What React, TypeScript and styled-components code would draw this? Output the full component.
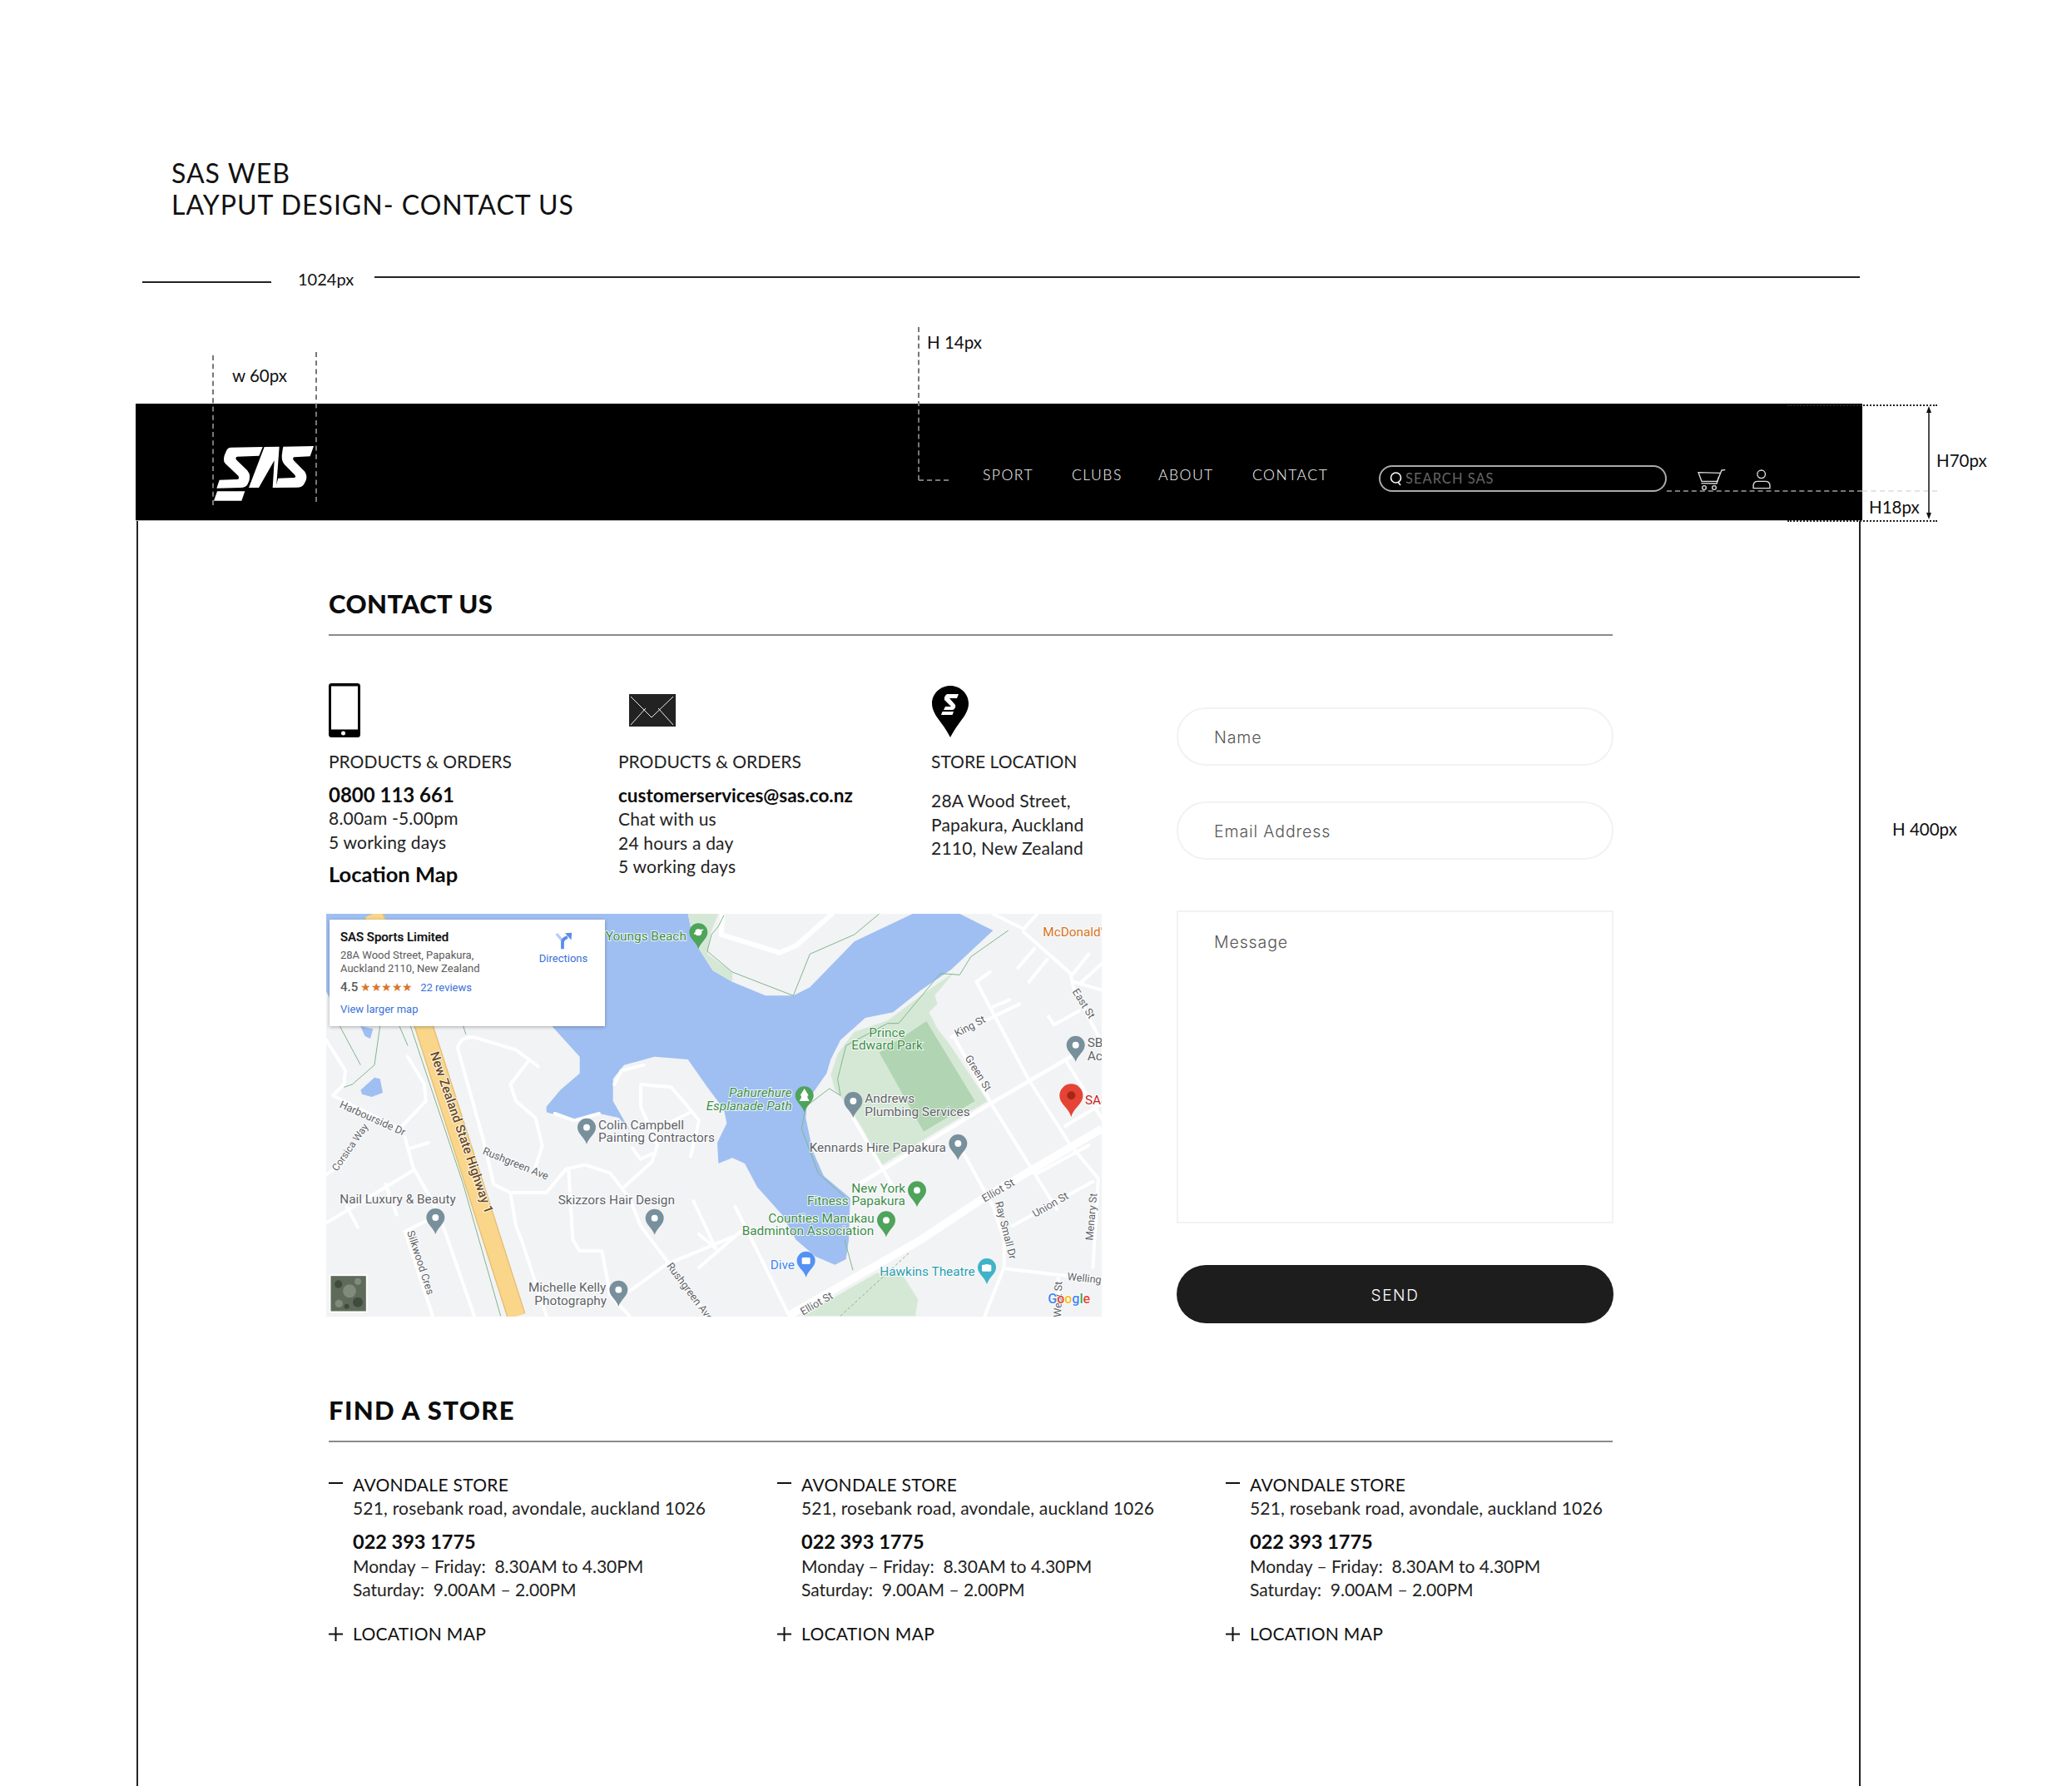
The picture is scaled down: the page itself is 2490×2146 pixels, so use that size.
import React from "react";
import styled, { createGlobalStyle } from "styled-components";

const Global = createGlobalStyle`
  html, body { margin: 0; padding: 0; background: #fff; }
  * { box-sizing: border-box; }
`;

const FONT = `"Lato", "Open Sans", "Liberation Sans", sans-serif`;
const FORM_FONT = `"Inter", "Open Sans", "Liberation Sans", sans-serif`;

const Root = styled.div`
  position: relative;
  width: 2490px;
  height: 2146px;
  overflow: hidden;
  background: #fff;
  color: #111;
  font-family: ${FONT};
  display: flex;
  flex-direction: column;
`;
const TitleBlock = styled.h1`
  margin: 0;
  padding: 189px 0 0 206px;
  font-size: 32px;
  line-height: 38px;
  font-weight: 400;
  letter-spacing: 1px;
  color: #111;
`;
const RulerRow = styled.div`
  margin-top: 55px;
  height: 30px;
  padding-left: 171px;
  display: flex;
  align-items: flex-start;
  flex: none;
`;
const RulerLine = styled.div<{ $w: number; $top: number }>`
  width: ${(p) => p.$w}px;
  height: 2px;
  margin-top: ${(p) => p.$top}px;
  background: #222;
  flex: none;
`;
const RulerLabel = styled.div`
  width: 124px;
  padding-left: 32px;
  font-size: 20px;
  line-height: 30px;
  flex: none;
`;
const Header = styled.header`
  margin: 135px 0 0 163px;
  width: 2075px;
  height: 141px;
  flex: none;
  background: #000;
  border-bottom: 1px solid #bbb;
  display: flex;
  align-items: flex-start;
  padding: 74px 0 0 94px;
`;
const LogoWrap = styled.div`
  width: 120px;
  height: 66px;
  margin-top: -23px;
  flex: none;
  svg { display: block; }
`;
const Nav = styled.nav`
  margin-left: 804px;
  width: 478px;
  padding-top: 2px;
  flex: none;
  display: grid;
  grid-template-columns: 107px 104px 113px 1fr;
`;
const NavItem = styled.a`
  color: #fff;
  font-size: 17.5px;
  line-height: 20px;
  font-weight: 300;
  letter-spacing: 1.5px;
`;
const Search = styled.div`
  width: 346px;
  height: 32px;
  margin-left: -2px;
  flex: none;
  border: 2px solid #aaa;
  border-radius: 16px;
  display: flex;
  align-items: center;
  padding-left: 11px;
  gap: 3px;
  color: #666;
  font-size: 16.5px;
  letter-spacing: 1px;
  svg { flex: none; }
`;
const IconButton = styled.div<{ $ml: number; $mt: number }>`
  margin-left: ${(p) => p.$ml}px;
  margin-top: ${(p) => p.$mt}px;
  flex: none;
  line-height: 0;
`;
const PageFrame = styled.main`
  margin-left: 164px;
  width: 2072px;
  flex: 1;
  border-left: 2px solid #222;
  border-right: 2px solid #222;
  padding: 81px 0 0 229px;
`;
const Content = styled.div`
  width: 1543px;
`;
const SectionTitle = styled.h2<{ $ls: number }>`
  margin: 0;
  font-size: 31px;
  line-height: 36px;
  font-weight: 900;
  letter-spacing: ${(p) => p.$ls}px;
  padding-bottom: 19px;
  border-bottom: 2px solid #8a8a8a;
  color: #0c0c0c;
`;
const ContactBody = styled.div`
  display: grid;
  grid-template-columns: 1019px 525px;
`;
const LeftCol = styled.div`
  padding-top: 57px;
`;
const InfoGrid = styled.div`
  display: grid;
  grid-template-columns: 348px 376px 1fr;
  height: 246px;
`;
const InfoCol = styled.div``;
const IconSlot = styled.div`
  height: 65px;
  display: flex;
  align-items: center;
  svg { display: block; }
`;
const EnvelopeSlot = styled(IconSlot)`
  padding-left: 13px;
`;
const PinSlot = styled(IconSlot)`
  padding-top: 4px;
`;
const InfoLabel = styled.div`
  margin-top: 14px;
  font-size: 21px;
  line-height: 29px;
  color: #222;
`;
const InfoStrong = styled.div<{ $mt: number; $size: number }>`
  margin-top: ${(p) => p.$mt}px;
  font-size: ${(p) => p.$size}px;
  line-height: 29px;
  font-weight: 700;
  color: #0c0c0c;
`;
const InfoLine = styled.div`
  font-size: 21px;
  line-height: 28.6px;
  letter-spacing: 0.2px;
  color: #222;
`;
const InfoLines = styled.div<{ $mt: number }>`
  margin-top: ${(p) => p.$mt}px;
`;
const MapCanvas = styled.div`
  position: relative;
  margin: 31px 0 0 -3px;
  width: 932px;
  height: 484px;
  overflow: hidden;
  background: #f2f3f5;
  svg { display: block; }
`;
const MapText = styled.text<{ $c: string; $i?: boolean; $w?: number; $s?: number }>`
  font-family: "Roboto", "Liberation Sans", sans-serif;
  font-size: ${(p) => p.$s ?? 46}px;
  font-style: ${(p) => (p.$i ? "italic" : "normal")};
  font-weight: ${(p) => p.$w ?? 400};
  fill: ${(p) => p.$c};
  paint-order: stroke;
  stroke: rgba(255, 255, 255, 0.85);
  stroke-width: 6px;
`;
const InfoCard = styled.div`
  position: absolute;
  left: 4px;
  top: 7px;
  width: 331px;
  height: 128px;
  background: #fff;
  box-shadow: 0 1px 4px rgba(0, 0, 0, 0.3);
  padding: 12px 0 0 13px;
  font-family: "Roboto", "Liberation Sans", sans-serif;
  display: flex;
`;
const CardMain = styled.div`
  width: 239px;
  flex: none;
`;
const CardTitle = styled.div`
  font-size: 15px;
  line-height: 18px;
  font-weight: 500;
  color: #111;
  -webkit-text-stroke: 0.2px #111;
`;
const CardAddress = styled.div`
  margin-top: 5px;
  font-size: 13px;
  line-height: 15.5px;
  color: #5b5b5b;
`;
const CardRating = styled.div`
  margin-top: 4px;
  height: 22px;
  display: flex;
  align-items: center;
  font-size: 15px;
  font-weight: 500;
  color: #5b5b5b;
`;
const Stars = styled.span`
  margin-left: 3px;
  width: 60px;
  font-size: 14px;
  letter-spacing: -0.5px;
  color: #d9762a;
`;
const CardLink = styled.a`
  color: #3a71d8;
  font-size: 13px;
  font-weight: 400;
`;
const ReviewLink = styled(CardLink)`
  margin-left: 12px;
`;
const LargerLink = styled(CardLink)`
  display: block;
  margin-top: 8px;
  line-height: 16px;
`;
const Directions = styled.div`
  width: 62px;
  margin-left: -2px;
  display: flex;
  flex-direction: column;
  align-items: center;
  color: #3a71d8;
  font-size: 13px;
  line-height: 16px;
  svg { margin: 3px 0 3px; }
`;
const Form = styled.form`
  padding-top: 86px;
  display: flex;
  flex-direction: column;
`;
const Field = styled.div<{ $mt: number }>`
  margin-top: ${(p) => p.$mt}px;
  height: 70px;
  border: 2px solid #f2f2f2;
  border-radius: 35px;
  padding: 2px 0 0 43px;
  display: flex;
  align-items: center;
  font-family: ${FORM_FONT};
  font-size: 19.5px;
  font-weight: 300;
  letter-spacing: 0.9px;
  color: #555;
`;
const MessageBox = styled.div`
  margin-top: 61px;
  height: 376px;
  border: 2px solid #f2f2f2;
  padding: 22px 0 0 43px;
  font-family: ${FORM_FONT};
  font-size: 19.5px;
  line-height: 28px;
  font-weight: 300;
  letter-spacing: 0.9px;
  color: #555;
`;
const SendButton = styled.button`
  margin-top: 50px;
  height: 70px;
  border: 0;
  border-radius: 35px;
  background: #1d1d1d;
  color: #fff;
  padding: 3px 0 0;
  font-family: ${FORM_FONT};
  font-size: 19px;
  font-weight: 300;
  letter-spacing: 1.6px;
`;
const FindTitle = styled(SectionTitle)`
  margin-top: 86px;
`;
const StoreGrid = styled.div`
  display: grid;
  grid-template-columns: repeat(3, 539px);
  padding-top: 37px;
`;
const Store = styled.div`
  display: grid;
  grid-template-columns: 29px 1fr;
`;
const StoreMark = styled.div`
  padding-top: 9px;
  line-height: 0;
`;
const PlusMark = styled.div`
  line-height: 0;
  padding-top: 6px;
`;
const StoreBody = styled.div``;
const StoreTitle = styled.div`
  font-size: 21px;
  line-height: 28px;
  color: #111;
  letter-spacing: 0.3px;
`;
const StoreText = styled.div`
  font-size: 21px;
  line-height: 28.5px;
  color: #222;
`;
const StoreAddress = styled(StoreText)`
  letter-spacing: 0.19px;
`;
const StorePhone = styled.div`
  margin-top: 11px;
  font-size: 23.5px;
  line-height: 29px;
  font-weight: 700;
  color: #0c0c0c;
  margin-bottom: 1px;
`;
const LocationRow = styled.div`
  grid-column: 1 / 3;
  display: grid;
  grid-template-columns: 29px 1fr;
  margin-top: 24px;
`;
const LocationText = styled(StoreTitle)``;

/* design annotations laid over the canvas */
const DimLabel = styled.div<{ $x: number; $y: number }>`
  position: absolute;
  left: ${(p) => p.$x}px;
  top: ${(p) => p.$y}px;
  font-size: 20.5px;
  line-height: 24px;
  color: #111;
`;
const VDash = styled.div<{ $x: number; $y: number; $h: number }>`
  position: absolute;
  left: ${(p) => p.$x}px;
  top: ${(p) => p.$y}px;
  height: ${(p) => p.$h}px;
  border-left: 2px dashed #777;
`;
const HDash = styled.div<{ $x: number; $y: number; $w: number; $c: string; $style?: string }>`
  position: absolute;
  left: ${(p) => p.$x}px;
  top: ${(p) => p.$y}px;
  width: ${(p) => p.$w}px;
  border-top: 2px ${(p) => p.$style ?? "dashed"} ${(p) => p.$c};
`;
const ArrowSvg = styled.svg`
  position: absolute;
  left: 2310px;
  top: 486px;
`;

const Logo = () => (
  <svg width="120" height="66" viewBox="50 108 360 198">
    <g fill="#fff">
      <path d="M112 113 L226 111 L213 143 L134 146 Q125 150 132 158 L170 195 Q188 215 172 245 Q165 258 145 258 L60 260 L70 230 L132 228 Q145 228 138 215 L92 172 Q78 158 95 125 Q100 113 112 113 Z" />
      <path d="M62 271 L162 271 L150 305 L50 305 Z" />
      <path d="M232 111 L286 110 L275 258 L262 258 L268 160 L212 258 L176 258 Z" />
      <path d="M300 110 L410 108 L397 145 L340 148 Q332 150 338 160 L378 200 Q392 222 375 245 Q368 257 350 257 L272 258 L282 224 L338 222 Q348 222 342 212 L305 175 Q292 160 296 135 Q298 118 300 110 Z" />
    </g>
  </svg>
);

const SearchIcon = () => (
  <svg width="16" height="18" viewBox="0 0 16 18" fill="none" stroke="#fff" strokeWidth="1.6">
    <circle cx="7.5" cy="8" r="6" />
    <path d="M10 13 L13 17" />
  </svg>
);

const CartIcon = () => (
  <svg width="34" height="26" viewBox="65 42 102 78" fill="none" stroke="#ddd" strokeWidth="4">
    <path d="M165 44 L152 45 L148 55 L68 53 L80 85 L136 85 L148 55" />
    <path d="M142 68 L134 93 L78 92" />
    <circle cx="89" cy="108" r="7" />
    <circle cx="125" cy="108" r="7" />
  </svg>
);

const PersonIcon = () => (
  <svg width="22" height="24" viewBox="257 40 64 70" fill="none" stroke="#ddd" strokeWidth="4">
    <circle cx="288" cy="57" r="14" />
    <path d="M260 106 L260 95 Q262 82 275 82 L302 82 Q317 82 318 95 L318 106 Z" />
  </svg>
);

const PhoneIcon = () => (
  <svg width="38" height="65" viewBox="0 0 38 65">
    <rect width="38" height="65" rx="3.5" fill="#000" />
    <rect x="3" y="3.5" width="32" height="52" fill="#fff" />
    <circle cx="17.5" cy="60" r="2.5" fill="#fff" />
  </svg>
);

const EnvelopeIcon = () => (
  <svg width="56" height="39" viewBox="0 0 56 39">
    <rect width="56" height="39" fill="#222" />
    <path d="M2 3 L27 28 L53 3 M2 37 L20 17 M53 37 L35 17" stroke="#eee" strokeWidth="1" fill="none" />
  </svg>
);

const StorePinIcon = () => (
  <svg width="46" height="65" viewBox="0 0 46 65">
    <path d="M23 1 C10.8 1 1 10.6 1 22.5 C1 32 8 40 13 47 C17 52.5 20.5 58 23 63 C25.5 58 29 52.5 33 47 C38 40 45 32 45 22.5 C45 10.6 35.2 1 23 1 Z" fill="#000" />
    <path d="M19 11 L33 11 L31 16 L22 16 L29 24 Q30 28 26 30 L15 30 L17 26 L24 26 L16 18 Q15 14 19 11 Z" fill="#fff" />
    <path d="M13.5 32 L27 32 L25.5 36 L12 36 Z" fill="#fff" />
  </svg>
);

const MinusIcon = () => (
  <svg width="17" height="4" viewBox="0 0 17 4"><rect width="17" height="2" fill="#111" /></svg>
);
const PlusIcon = () => (
  <svg width="17" height="17" viewBox="0 0 17 17"><path d="M0 8.5 H17 M8.5 0 V17" stroke="#111" strokeWidth="2" /></svg>
);

const Pin = ({ x, y, c, r = 33 }: { x: number; y: number; c: string; r?: number }) => (
  <g>
    <path
      d={`M${x - r} ${y} a${r} ${r} 0 0 1 ${2 * r} 0 c0 ${r * 0.7} ${-r * 0.75} ${r * 1.05} ${-r} ${r * 1.82} c${-r * 0.25} ${-r * 0.77} ${-r} ${-r * 1.12} ${-r} ${-r * 1.82} z`}
      fill={c}
    />
    <circle cx={x} cy={y} r={r * 0.36} fill="#fff" />
  </g>
);

type LabelProps = { x: number; y: number; c?: string; r?: number; i?: boolean; w?: number; s?: number; children: React.ReactNode };
const Label = ({ x, y, c = "#5f6368", r, i, w, s, children }: LabelProps) => (
  <MapText x={x} y={y} $c={c} $i={i} $w={w} $s={s ?? (r ? 38 : 46)} transform={r ? `rotate(${r} ${x} ${y})` : undefined}>
    {children}
  </MapText>
);

const WATER = "#9fbff2";
const ROAD = "#ffffff";
const GREEN = "#3e8e4a";
const PATH = "#7fb68a";

const Z4_ROADS = [
  "M36 480 L105 590 L100 640 L60 680 L300 800",
  "M300 800 L395 700 L390 640 L330 540",
  "M320 830 L350 940 L440 1100 L570 1475",
  "M340 870 L405 850",
  "M36 1140 L350 950",
  "M250 1000 L290 1110",
  "M110 1080 L150 1155",
  "M36 965 L100 920",
  "M320 1170 L400 1130",
  "M320 1170 L420 1475",
  "M800 575 L720 515 L570 470 Q520 465 510 510 L600 830 L640 1000 L700 1030 L830 1030 L900 945 L970 930 L1060 960 L1130 1050 L1170 1150 L1260 1270 L1410 1475",
  "M765 555 L700 640 L720 700 L790 760 L815 860 L790 940",
  "M700 1030 L720 1150 L740 1200 L830 1475",
  "M910 950 L925 1200 L950 1240 L1030 1240 L1060 1400 L1130 1475",
  "M1110 1010 L1210 920 L1230 860 L1170 720 L1170 640 L1280 650 L1340 720 L1380 770 L1350 900",
  "M1230 800 L1350 740",
  "M1140 870 L1170 910 L1210 890",
  "M1130 1385 L1260 1290 L1500 1190",
  "M1360 1060 L1440 1230",
  "M1075 640 L1100 590 L1180 570",
  "M860 745 L930 770 L1020 745",
];
const Z5_ROADS = [
  "M1000 270 L1050 235 M1000 270 L1190 625 L1340 860 L1440 980 L1420 1300",
  "M920 470 L1060 720 L1290 1090",
  "M1060 360 L1120 335 M910 470 L1155 350",
  "M555 760 L700 1010",
  "M950 880 L1060 1080 L1100 1200 L1100 1300 L1030 1475",
  "M1110 1305 L1330 1330 L1452 1340",
  "M1130 1150 L1420 990",
  "M1170 80 L1060 25 M1170 80 L1220 25 M1170 90 L1340 240 L1350 290 L1452 490",
  "M1350 270 L1452 300 M1350 240 L1405 170 M1190 270 L1255 190 M1150 220 L1210 150 M1380 270 L1452 205",
  "M1260 395 L1280 425 L1370 375",
  "M1320 550 L1450 760 M1320 790 L1452 710",
  "M130 1080 L230 1280 L320 1465 M0 1300 L150 1170 M0 1180 L60 1230",
  "M1220 960 L1405 860",
  "M1300 1475 L1295 1340",
];

const MapDrawing = () => (
  <svg width="932" height="484" viewBox="0 0 932 484">
    <rect width="932" height="484" fill="#f2f3f5" />
    <g transform="scale(0.33333) translate(-36 -25)">
      {/* water */}
      <path
        fill={WATER}
        d="M36 25 L1340 25 L1360 120 L1430 230 L1500 270 L1620 320 L1720 320 L1780 290 L1940 125 L2150 25 L2320 25 L2440 85 L2290 225 L2180 300 L2080 380 L1980 400 L1890 480 L1855 550 L1840 600 L1770 700 L1765 760 L1790 880 L1830 970 L1890 1020 L1925 1050 L1920 1200 L1910 1270 L1870 1290 L1800 1260 L1730 1200 L1680 1110 L1590 1010 L1545 925 L1500 905 L1450 925 L1446 850 L1480 780 L1470 730 L1410 650 L1340 550 L1220 540 L1110 570 L1070 620 L1070 700 L1130 805 L1090 760 L1020 745 L930 770 L830 740 L830 720 L880 660 L950 600 L950 540 L850 430 L100 430 L36 305 Z"
      />
      <path fill={WATER} d="M210 615 L230 620 L240 670 L200 685 L165 675 L160 660 Z" />
      <path fill={WATER} d="M160 430 L205 440 L195 475 L175 465 Z" />
      {/* parks */}
      <path fill="#d5e8d6" d="M1855 605 L1880 530 L1940 450 L2060 410 L2180 320 L2300 235 L2230 320 L2240 350 L2210 380 L2240 440 L2280 490 L2420 700 L2040 930 L1970 800 L1920 720 L1870 660 Z" />
      <path fill="#b1d5b2" d="M2030 525 L2200 412 L2375 700 L2190 810 Z" />
      <path fill="#d5e8d6" d="M1750 1475 L2020 1320 L2110 1320 L2170 1415 L2160 1475 Z" />
      <path fill="#d5e8d6" d="M1340 25 L1450 25 L1420 100 L1410 170 L1500 235 L1500 270 L1430 230 L1360 120 Z" />
      {/* roads */}
      <g fill="none" stroke={ROAD} strokeWidth="12" strokeLinecap="round" strokeLinejoin="round">
        {Z4_ROADS.map((d) => <path key={d} d={d} />)}
        <g transform="translate(1380 0)">{Z5_ROADS.map((d) => <path key={d} d={d} />)}</g>
        <path d="M1465 25 L1460 100 L1670 165 L1730 140 L1860 25" strokeWidth="18" />
        <path d="M1940 1010 L2430 710 L2720 540" strokeWidth="14" />
        <path d="M1700 1475 L2180 1200 L2390 1060 L2832 800" strokeWidth="28" strokeLinecap="butt" />
      </g>
      {/* green paths */}
      <g fill="none" stroke={PATH} strokeWidth="3">
        <path d="M1470 30 L1450 70 L1425 100 L1410 160 L1500 235 L1720 320 L1780 170 L1940 100 L2030 25" />
        <path d="M2495 85 L2360 180 L2320 245 L2250 240 L2100 420 L2060 420 L1910 500 L1880 620 L1890 680 L1850 655 L1765 720 L1750 800 L1810 960 L1910 1050" />
        <path d="M1905 1200 L1935 1310" />
        <path d="M1890 1475 L2140 1245" strokeDasharray="10 8" />
        <path d="M85 430 L160 570 M230 430 L210 570 L130 640 L100 650 M300 430 L330 500" />
        <path d="M340 430 L530 1000 L665 1475" />
        <path d="M530 430 L540 460" />
      </g>
      {/* highway */}
      <path d="M205 25 L388 430 L722 1475" fill="none" stroke="#e6bd74" strokeWidth="68" />
      <path d="M205 25 L388 430 L722 1475" fill="none" stroke="#f9d68a" strokeWidth="60" />
      {/* labels left */}
      <Label x={1043} y={122} c={GREEN}>Youngs Beach</Label>
      <Label x={1017} y={802}>Colin Campbell</Label>
      <Label x={1017} y={848}>Painting Contractors</Label>
      <Label x={85} y={1068}>Nail Luxury &amp; Beauty</Label>
      <Label x={872} y={1073}>Skizzors Hair Design</Label>
      <Label x={765} y={1388}>Michelle Kelly</Label>
      <Label x={787} y={1435}>Photography</Label>
      <Label x={410} y={528} r={71} s={46} c="#6b4a1f" w={500}>New Zealand State Highway 1</Label>
      <Label x={82} y={722} r={24}>Harbourside Dr</Label>
      <Label x={75} y={955} r={-55} s={36}>Corsica Way</Label>
      <Label x={598} y={890} r={22}>Rushgreen Ave</Label>
      <Label x={327} y={1172} r={72}>Silkwood Cres</Label>
      <Label x={1262} y={1295} r={53}>Rushgreen Ave</Label>
      <Pin x={975} y={795} c="#78909c" />
      <Pin x={430} y={1120} c="#78909c" />
      <Pin x={1220} y={1122} c="#78909c" />
      <Pin x={1090} y={1380} c="#78909c" />
      <Pin x={1378} y={92} c="#4ea45a" />
      <path d="M1362 98 L1395 82 M1370 82 L1376 96" stroke="#fff" strokeWidth="5" fill="none" />
      {/* labels right */}
      <g transform="translate(1380 0)">
        <Label x={108} y={686} c={GREEN} i>Pahurehure</Label>
        <Label x={26} y={732} c={GREEN} i>Esplanade Path</Label>
        <Label x={613} y={468} c={GREEN}>Prince</Label>
        <Label x={550} y={514} c={GREEN}>Edward Park</Label>
        <Label x={598} y={707}>Andrews</Label>
        <Label x={598} y={753}>Plumbing Services</Label>
        <Label x={398} y={883}>Kennards Hire Papakura</Label>
        <Label x={550} y={1030} c={GREEN}>New York</Label>
        <Label x={390} y={1076} c={GREEN}>Fitness Papakura</Label>
        <Label x={250} y={1137} c={GREEN}>Counties Manukau</Label>
        <Label x={155} y={1184} c={GREEN}>Badminton Association</Label>
        <Label x={257} y={1305} c="#4285f4">Dive</Label>
        <Label x={652} y={1330} c="#2a9db0">Hawkins Theatre</Label>
        <Label x={1240} y={105} c="#d9731a">McDonald's</Label>
        <Label x={1400} y={505}>SBS</Label>
        <Label x={1400} y={552}>Ac</Label>
        <Label x={1392} y={712} c="#c5221f">SAS</Label>
        <Label x={930} y={470} r={-28}>King St</Label>
        <Label x={958} y={545} r={58}>Green St</Label>
        <Label x={1345} y={305} r={58}>East St</Label>
        <Label x={1030} y={1065} r={-30}>Elliot St</Label>
        <Label x={375} y={1473} r={-30}>Elliot St</Label>
        <Label x={1068} y={1065} r={76}>Ray Small Dr</Label>
        <Label x={1212} y={1120} r={-30}>Union St</Label>
        <Label x={1420} y={1203} r={-85}>Menary St</Label>
        <Label x={1327} y={1345} r={6}>Wellington St</Label>
        <Label x={1305} y={1480} r={-88}>West St</Label>
        <Pin x={1358} y={498} c="#78909c" />
        <Pin x={556} y={700} c="#78909c" />
        <Pin x={934} y={853} c="#78909c" />
        <Pin x={380} y={680} c="#4ea45a" />
        <path d="M380 655 L395 680 L387 680 L398 700 L362 700 L373 680 L365 680 Z" fill="#fff" />
        <Pin x={786} y={1022} c="#4ea45a" />
        <Pin x={675} y={1130} c="#4ea45a" />
        <Pin x={386} y={1275} c="#5491f5" />
        <rect x="371" y="1264" width="30" height="24" rx="4" fill="#fff" />
        <Pin x={1038} y={1300} c="#3fb3c8" />
        <rect x="1020" y="1290" width="34" height="24" rx="4" fill="#fff" />
        <path d="M1342 758 C1332 722 1300 712 1300 680 a42 42 0 0 1 84 0 C1384 712 1352 722 1342 758 Z" fill="#e54335" />
        <circle cx="1342" cy="680" r="15" fill="#a52714" />
        <MapText x={1258} y={1430} $c="#4285f4" $w={500} $s={48}>
          G<tspan fill="#ea4335">o</tspan><tspan fill="#fbbc05">o</tspan><tspan fill="#4285f4">g</tspan><tspan fill="#34a853">l</tspan><tspan fill="#ea4335">e</tspan>
        </MapText>
      </g>
      {/* satellite thumbnail */}
      <rect x="50" y="1328" width="132" height="132" fill="#5f6b5a" stroke="#fff" strokeWidth="5" />
      <g fill="#8a9384" opacity="0.8">
        <circle cx="120" cy="1385" r="24" />
        <circle cx="82" cy="1430" r="14" />
        <circle cx="150" cy="1350" r="12" />
      </g>
      <g fill="#3f4b3c">
        <circle cx="80" cy="1360" r="14" />
        <circle cx="150" cy="1425" r="18" />
        <circle cx="110" cy="1440" r="9" />
      </g>
    </g>
  </svg>
);

const DirectionsIcon = () => (
  <svg width="22" height="21" viewBox="858 90 64 62">
    <path d="M866 96 L890 125" stroke="#b5cdf7" strokeWidth="10" fill="none" />
    <path d="M887 150 L887 128 Q887 112 905 108" stroke="#5a8bee" strokeWidth="11" fill="none" />
    <path d="M896 94 L920 92 L918 118 Z" fill="#5a8bee" />
  </svg>
);

const stores = [1, 2, 3];

export default function App() {
  return (
    <Root>
      <Global />
      <TitleBlock>
        SAS WEB
        <br />
        LAYPUT DESIGN- CONTACT US
      </TitleBlock>
      <RulerRow>
        <RulerLine $w={155} $top={18} />
        <RulerLabel>1024px</RulerLabel>
        <RulerLine $w={1785} $top={12} />
      </RulerRow>
      <Header>
        <LogoWrap><Logo /></LogoWrap>
        <Nav>
          <NavItem>SPORT</NavItem>
          <NavItem>CLUBS</NavItem>
          <NavItem>ABOUT</NavItem>
          <NavItem>CONTACT</NavItem>
        </Nav>
        <Search><SearchIcon />SEARCH SAS</Search>
        <IconButton $ml={37} $mt={5}><CartIcon /></IconButton>
        <IconButton $ml={32} $mt={5}><PersonIcon /></IconButton>
      </Header>
      <PageFrame>
        <Content>
          <SectionTitle $ls={0.5}>CONTACT US</SectionTitle>
          <ContactBody>
            <LeftCol>
              <InfoGrid>
                <InfoCol>
                  <IconSlot><PhoneIcon /></IconSlot>
                  <InfoLabel>PRODUCTS &amp; ORDERS</InfoLabel>
                  <InfoStrong $mt={11} $size={24}>0800 113 661</InfoStrong>
                  <InfoLine>8.00am -5.00pm</InfoLine>
                  <InfoLine>5 working days</InfoLine>
                  <InfoStrong $mt={10} $size={25.5}>Location Map</InfoStrong>
                </InfoCol>
                <InfoCol>
                  <EnvelopeSlot><EnvelopeIcon /></EnvelopeSlot>
                  <InfoLabel>PRODUCTS &amp; ORDERS</InfoLabel>
                  <InfoStrong $mt={12} $size={22.5}>customerservices@sas.co.nz</InfoStrong>
                  <InfoLine>Chat with us</InfoLine>
                  <InfoLine>24 hours a day</InfoLine>
                  <InfoLine>5 working days</InfoLine>
                </InfoCol>
                <InfoCol>
                  <PinSlot><StorePinIcon /></PinSlot>
                  <InfoLabel>STORE LOCATION</InfoLabel>
                  <InfoLines $mt={19}>
                    <InfoLine>28A Wood Street,</InfoLine>
                    <InfoLine>Papakura, Auckland</InfoLine>
                    <InfoLine>2110, New Zealand</InfoLine>
                  </InfoLines>
                </InfoCol>
              </InfoGrid>
              <MapCanvas>
                <MapDrawing />
                <InfoCard>
                  <CardMain>
                    <CardTitle>SAS Sports Limited</CardTitle>
                    <CardAddress>
                      28A Wood Street, Papakura,
                      <br />
                      Auckland 2110, New Zealand
                    </CardAddress>
                    <CardRating>
                      4.5<Stars>★★★★★</Stars><ReviewLink>22 reviews</ReviewLink>
                    </CardRating>
                    <LargerLink>View larger map</LargerLink>
                  </CardMain>
                  <Directions>
                    <DirectionsIcon />
                    Directions
                  </Directions>
                </InfoCard>
              </MapCanvas>
            </LeftCol>
            <Form>
              <Field $mt={0}>Name</Field>
              <Field $mt={43}>Email Address</Field>
              <MessageBox>Message</MessageBox>
              <SendButton type="button">SEND</SendButton>
            </Form>
          </ContactBody>
          <FindTitle $ls={1.4}>FIND A STORE</FindTitle>
          <StoreGrid>
            {stores.map((s) => (
              <Store key={s}>
                <StoreMark><MinusIcon /></StoreMark>
                <StoreBody>
                  <StoreTitle>AVONDALE STORE</StoreTitle>
                  <StoreAddress>521, rosebank road, avondale, auckland 1026</StoreAddress>
                  <StorePhone>022 393 1775</StorePhone>
                  <StoreText>Monday – Friday:&nbsp; 8.30AM to 4.30PM</StoreText>
                  <StoreText>Saturday:&nbsp; 9.00AM – 2.00PM</StoreText>
                </StoreBody>
                <LocationRow>
                  <PlusMark><PlusIcon /></PlusMark>
                  <LocationText>LOCATION MAP</LocationText>
                </LocationRow>
              </Store>
            ))}
          </StoreGrid>
        </Content>
      </PageFrame>

      <DimLabel $x={279} $y={439}>w 60px</DimLabel>
      <DimLabel $x={1114} $y={399}>H 14px</DimLabel>
      <DimLabel $x={2327} $y={541}>H70px</DimLabel>
      <DimLabel $x={2246} $y={597}>H18px</DimLabel>
      <DimLabel $x={2274} $y={984}>H 400px</DimLabel>
      <VDash $x={255} $y={427} $h={180} />
      <VDash $x={379} $y={423} $h={180} />
      <VDash $x={1103} $y={393} $h={184} />
      <HDash $x={1104} $y={576} $w={36} $c="#777" />
      <HDash $x={2003} $y={589} $w={235} $c="#777" />
      <HDash $x={2238} $y={589} $w={90} $c="#e4e4e4" />
      <HDash $x={2148} $y={486} $w={180} $c="#222" $style="dotted" />
      <HDash $x={2148} $y={625} $w={180} $c="#222" $style="dotted" />
      <ArrowSvg width="16" height="140" viewBox="0 0 16 140">
        <path d="M8 6 V134" stroke="#111" strokeWidth="1.5" />
        <path d="M8 2 L5 10 L11 10 Z M8 138 L5 130 L11 130 Z" fill="#111" />
      </ArrowSvg>
    </Root>
  );
}
